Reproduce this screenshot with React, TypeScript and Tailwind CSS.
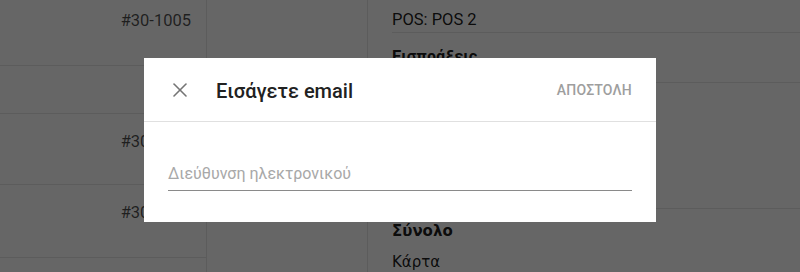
import { X } from 'lucide-react';

const font = { fontFamily: 'Roboto, "Noto Sans", sans-serif' };

function Background() {
  return (
    <div className="flex h-[272px] w-full bg-white" style={font}>
      <div className="flex w-[207px] flex-col border-r border-[#e6e6e6] text-[16.5px] text-black/70">
        <div className="flex h-[65px] items-start justify-end pr-[15px] pt-[9px]">#30-1005</div>
        <div className="h-[48px] border-t border-[#e6e6e6]" />
        <div className="flex h-[71px] items-start justify-end border-t border-[#e6e6e6] pr-[15px] pt-[16px]">#30-1006</div>
        <div className="flex h-[73px] items-start justify-end border-t border-[#e6e6e6] pr-[15px] pt-[16px]">#30-1007</div>
        <div className="flex-1 border-t border-[#e6e6e6]" />
      </div>
      <div className="w-[161px] border-r border-[#e6e6e6]" />
      <div className="flex flex-1 flex-col pl-[24px] text-[16.5px] text-black/90">
        <div className="flex h-[33px] items-start border-b border-[#e6e6e6] pt-[8px]">POS: POS 2</div>
        <div className="flex h-[50px] items-start border-b border-[#e6e6e6] pt-[12px] font-bold">Εισπράξεις</div>
        <div className="h-[126px] border-b border-[#e6e6e6]" />
        <div className="flex h-[44px] items-center font-bold" style={{ fontFamily: '"DejaVu Sans", sans-serif', fontSize: 15 }}>Σύνολο</div>
        <div className="leading-[18px]" style={{ fontFamily: '"DejaVu Sans", sans-serif', fontSize: 15 }}>Κάρτα</div>
      </div>
    </div>
  );
}

export default function App() {
  return (
    <div className="relative h-[272px] w-[800px] overflow-hidden">
      <Background />
      <div className="absolute inset-0 bg-black/60" />
      <div
        className="absolute left-[144px] top-[58px] flex h-[164px] w-[512px] flex-col bg-white"
        style={font}
      >
        <div className="flex h-[64px] items-center border-b border-[#e0e0e0] pl-[24px] pr-[24px]">
          <X className="h-[24px] w-[24px] text-[#757575]" strokeWidth={1.6} />
          <div className="ml-[24px] pt-[3px] text-[20px] font-medium text-[#212121]">Εισάγετε email</div>
          <div className="ml-auto pt-[1px] text-[14px] font-medium tracking-[0.2px] text-[#9e9e9e]">ΑΠΟΣΤΟΛΗ</div>
        </div>
        <div className="px-[24px] pt-[40px]">
          <div className="border-b border-[#8a8a8a] pb-[4px] text-[16px] text-[#a8a8a8]">Διεύθυνση ηλεκτρονικού</div>
        </div>
      </div>
    </div>
  );
}
